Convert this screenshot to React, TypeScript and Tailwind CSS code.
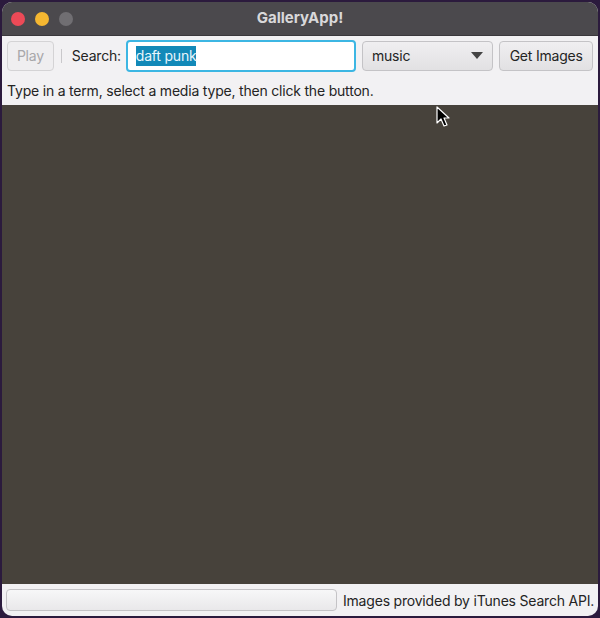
export default function App() {
  return (
    <div className="h-[618px] w-[600px] bg-[#2b1a3d] p-[2px] font-['Inter',sans-serif] text-[14px] tracking-[-0.2px] relative overflow-hidden">
      <div className="flex h-full flex-col overflow-hidden rounded-[10px] bg-[#f2f1f3]">
        {/* Title bar */}
        <div className="relative flex h-[33px] shrink-0 items-center bg-[#4b494d] px-[9px]">
          <div className="flex gap-[10px]">
            <span className="h-[14px] w-[14px] rounded-full bg-[#ec4a57]" />
            <span className="h-[14px] w-[14px] rounded-full bg-[#f5b731]" />
            <span className="h-[14px] w-[14px] rounded-full bg-[#706e72]" />
          </div>
          <div className="absolute inset-0 flex items-center justify-center text-[15px] font-bold tracking-normal text-[#d9d8da]">
            GalleryApp!
          </div>
        </div>

        {/* Toolbar */}
        <div className="flex h-[40px] shrink-0 items-center border-t border-[#3a383c] px-[5px] text-[#242424]">
          <button className="h-[30px] w-[47px] rounded-[4px] border border-[#d4d3d5] bg-[#efeef0] text-[#a8a7aa]">
            Play
          </button>
          <span className="ml-[7px] mr-[10px] h-[14px] w-px bg-[#c9c8cb]" />
          <span className="w-[49px]">Search:</span>
          <div className="ml-[5px] flex h-[32px] w-[231px] items-center rounded-[4px] border-2 border-[#3cb6e3] bg-white px-[8px]">
            <span className="bg-[#1289b8] leading-[20px] text-[#e8f6fc]">daft punk</span>
          </div>
          <div className="ml-[6px] flex h-[30px] w-[132px] items-center justify-between rounded-[4px] border border-[#c4c3c6] bg-gradient-to-b from-[#f0eff1] to-[#e2e1e3] pl-[9px] pr-[9px]">
            <span>music</span>
            <svg width="12" height="7" viewBox="0 0 12 7">
              <path d="M0 0h12L6 7z" fill="#444" />
            </svg>
          </div>
          <button className="ml-[6px] h-[30px] w-[94px] rounded-[4px] border border-[#c4c3c6] bg-gradient-to-b from-[#f0eff1] to-[#e2e1e3]">
            Get Images
          </button>
        </div>

        {/* Hint */}
        <div className="flex h-[30px] shrink-0 items-center px-[5px] text-[#242424]">
          Type in a term, select a media type, then click the button.
        </div>

        {/* Content */}
        <div className="flex-1 bg-[#47423b]" />

        {/* Status bar */}
        <div className="flex h-[32px] shrink-0 items-center gap-[6px] px-[4px] text-[#242424]">
          <div className="h-[22px] w-[331px] shrink-0 rounded-[4px] border border-[#c4c3c6] bg-gradient-to-b from-[#f7f7f8] to-[#e9e8ea]" />
          <span className="whitespace-nowrap">Images provided by iTunes Search API.</span>
        </div>
      </div>

      {/* Mouse cursor */}
      <svg className="absolute left-[436px] top-[106px]" width="14" height="22" viewBox="0 0 14 22">
        <path d="M1 1v16l4-4 3 7 3-1-3-7h5z" fill="#000" stroke="#fff" strokeWidth="1.2" strokeLinejoin="round" />
      </svg>
    </div>
  );
}
